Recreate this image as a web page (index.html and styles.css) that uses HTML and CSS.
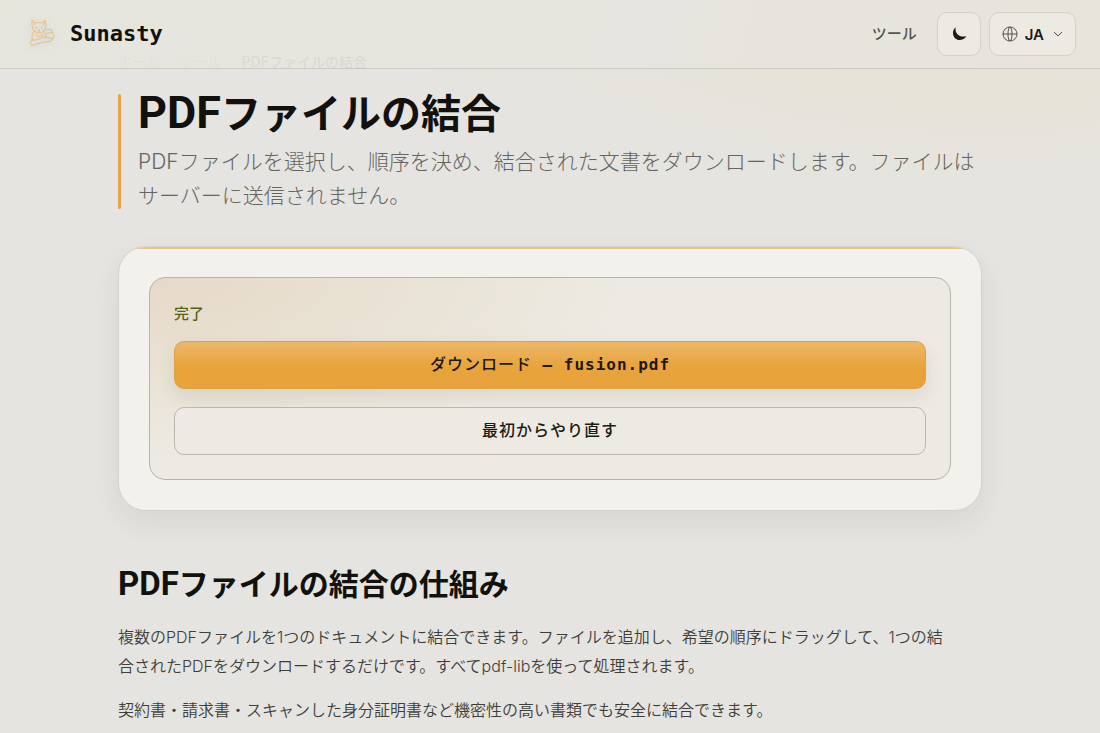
FILE: index.html
```
<!DOCTYPE html>
<html lang="ja">

<head>
    <meta charset="UTF-8">
    <meta name="viewport" content="width=device-width, initial-scale=1.0">
    <title>PDFファイルの結合 - Sunasty</title>
    <link rel="stylesheet" href="styles.css">
</head>

<body>

    <header class="site-header">
        <a class="brand" href="#">
            <svg class="brand-logo" viewBox="0 0 36 40" aria-hidden="true">
                <path d="M9 15 Q7 9 8 6 L12 9 Q15 8 18 9 L21 6 Q23 11 21 15 Q19 19 15 19 Q11 19 9 15 Z" />
                <path d="M11 13 L13 14 M19 13 L17 14 M14 16 H16 M15 16 V18 M9 7 L11 11 M21 7 L19 11" />
                <path d="M10 17 Q7 21 8 26 M20 17 Q22 20 22 24" />
                <path d="M8 26 Q5 29 7 31 Q9 32 12 30 L27 27 Q29 26 27 24 L20 23 L12 26 Z" />
                <path d="M21 16 L27 15 L30 22 Q30 25 27 25 M22 20 L28 18 M11 20 L15 23 L20 20" />
            </svg>
            <span>Sunasty</span>
        </a>
        <nav class="site-nav">
            <a class="nav-link" href="#">ツール</a>
            <button class="icon-btn" type="button" aria-label="テーマ">
                <svg class="moon" viewBox="0 0 16 16" aria-hidden="true">
                    <path d="M5 2 C4 7.500 8.500 11.500 14.500 10 C12.500 13.500 8 14.500 5 12.200 C1.800 9.500 2 4.500 5 2 Z" />
                </svg>
            </button>
            <button class="icon-btn lang-btn" type="button">
                <svg class="globe" viewBox="0 0 16 16" aria-hidden="true">
                    <circle cx="8" cy="8" r="7" />
                    <ellipse cx="8" cy="8" rx="2" ry="7" />
                    <path d="M1 8 H15" />
                </svg>
                <span>JA</span>
                <svg class="chevron" viewBox="0 0 10 10" aria-hidden="true">
                    <path d="M1 3 L5 7 L9 3" />
                </svg>
            </button>
        </nav>
    </header>

    <main class="page">
        <nav class="breadcrumb">
            <a href="#">ホーム</a>
            <a href="#">ツール</a>
            <span class="current">PDFファイルの結合</span>
        </nav>

        <section class="intro">
            <h1><span class="latin">PDF</span>ファイルの結合</h1>
            <p>PDFファイルを選択し、順序を決め、結合された文書をダウンロードします。ファイルはサーバーに送信されません。</p>
        </section>

        <section class="card">
            <div class="result">
                <p class="status">完了</p>
                <button class="btn btn-primary" type="button">ダウンロード <b>— fusion.pdf</b></button>
                <button class="btn btn-outline" type="button">最初からやり直す</button>
            </div>
        </section>

        <section class="about">
            <h2><span class="latin">PDF</span>ファイルの結合の仕組み</h2>
            <p>複数のPDFファイルを1つのドキュメントに結合できます。ファイルを追加し、希望の順序にドラッグして、1つの結合されたPDFをダウンロードするだけです。すべてpdf-libを使って処理されます。</p>
            <p>契約書・請求書・スキャンした身分証明書など機密性の高い書類でも安全に結合できます。</p>
        </section>
    </main>

</body>

</html>
```
FILE: styles.css
```
* {
    box-sizing: border-box;
}

html {
    overflow: hidden;
}

body {
    margin: 0;
    min-height: 100vh;
    font-family: Inter, "Noto Sans CJK JP", sans-serif;
    color: #12110d;
    background: radial-gradient(ellipse 620px 210px at 90% 0, #e7e2d3, transparent) #e5e4e0;
}

h1,
h2,
p {
    margin: 0;
}

a {
    color: inherit;
    text-decoration: none;
}

/* header */
.site-header {
    position: sticky;
    top: 0;
    z-index: 2;
    display: flex;
    align-items: center;
    justify-content: space-between;
    padding: 12px 24px;
    border-bottom: 1px solid #cbcac5;
    background: linear-gradient(110deg, rgba(230, 230, 221, 0.93), rgba(230, 229, 223, 0.93) 50%, rgba(231, 228, 220, 0.93));
}

.brand {
    display: flex;
    align-items: center;
    gap: 10px;
    font-family: "DejaVu Sans Mono", monospace;
    font-size: 22px;
    font-weight: 700;
    line-height: 24px;
}

.brand-logo {
    width: 36px;
    height: 40px;
    fill: none;
    stroke: #e9bd7c;
    stroke-width: 1;
    stroke-linejoin: round;
    filter: drop-shadow(0 2px 4px rgba(0, 0, 0, 0.12));
}

.site-nav {
    display: flex;
    align-items: center;
    gap: 8px;
}

.nav-link {
    margin-right: 12px;
    padding-bottom: 4px;
    color: #55534c;
    font-size: 15px;
    font-weight: 500;
}

.icon-btn {
    display: flex;
    align-items: center;
    justify-content: center;
    min-width: 44px;
    height: 44px;
    padding: 0 12px;
    border: 1px solid #d2d0c9;
    border-radius: 10px;
    background: #edeae3;
    color: #1c1b18;
    font-family: inherit;
    font-size: 15px;
    font-weight: 600;
}

.lang-btn {
    gap: 7px;
}

.moon {
    width: 18px;
    height: 18px;
    fill: #1c1b18;
}

.globe,
.chevron {
    width: 16px;
    height: 16px;
    fill: none;
    stroke: #55534c;
    stroke-width: 1;
}

.chevron {
    width: 10px;
    height: 10px;
    margin-left: 2px;
}

/* content */
.page {
    max-width: 912px;
    margin: -18px auto 0;
    padding: 0 24px;
}

.breadcrumb {
    display: flex;
    gap: 20px;
    height: 22px;
    margin-bottom: 17px;
    color: #a5a39b;
    font-size: 14px;
    line-height: 22px;
}

.breadcrumb .current {
    color: #33322e;
    font-weight: 500;
}

.intro {
    position: relative;
    padding-left: 20px;
}

.intro::before {
    content: "";
    position: absolute;
    top: 4px;
    bottom: 4px;
    left: 0;
    width: 3px;
    border-radius: 2px;
    background: #e5a34a;
}

h1 {
    margin-bottom: 8px;
    font-size: 40px;
    line-height: 46px;
}

h1 .latin {
    font-family: Roboto, sans-serif;
    font-size: 45px;
}

.intro p {
    color: #66645d;
    font-size: 21px;
    font-weight: 300;
    line-height: 34px;
}

.card {
    position: relative;
    overflow: hidden;
    margin-top: 33px;
    padding: 30px;
    border: 1px solid #d3d2cc;
    border-radius: 28px;
    background: #f2f1ec;
    box-shadow: 0 12px 28px rgba(60, 55, 30, 0.08);
}

.card::before {
    content: "";
    position: absolute;
    top: 0;
    left: 0;
    right: 0;
    height: 2px;
    background: #e8c48f;
}

.result {
    display: flex;
    flex-direction: column;
    padding: 24px;
    border: 1px solid #b5b3ac;
    border-radius: 16px;
    background: radial-gradient(ellipse 60% 90% at 0 0, #e6d9c7, #e9e2d4 50%, transparent) #edeae3;
}

.status {
    margin-bottom: 16px;
    color: #586311;
    font-size: 15px;
    font-weight: 500;
    line-height: 23px;
}

.btn {
    height: 48px;
    padding-bottom: 5px;
    border: 1px solid #b9b7b0;
    border-radius: 10px;
    background: #edeae3;
    color: #1b1a14;
    font-family: "DejaVu Sans Mono", "Noto Sans CJK JP", monospace;
    font-size: 16px;
    font-weight: 500;
    letter-spacing: 1px;
}

.btn-primary {
    margin-bottom: 18px;
    border-color: #dea246;
    background: linear-gradient(#edb768, #e8a33b 55%, #e8a23c);
    box-shadow: 0 8px 18px rgba(60, 55, 30, 0.1);
}

.about {
    padding-top: 52px;
}

h2 {
    margin-bottom: 18px;
    font-size: 30px;
    line-height: 42px;
}

h2 .latin {
    font-family: Roboto, sans-serif;
    font-size: 33px;
}

.about p {
    max-width: 840px;
    margin-bottom: 15px;
    color: #403e38;
    font-size: 16px;
    font-weight: 350;
    line-height: 29px;
}
```
